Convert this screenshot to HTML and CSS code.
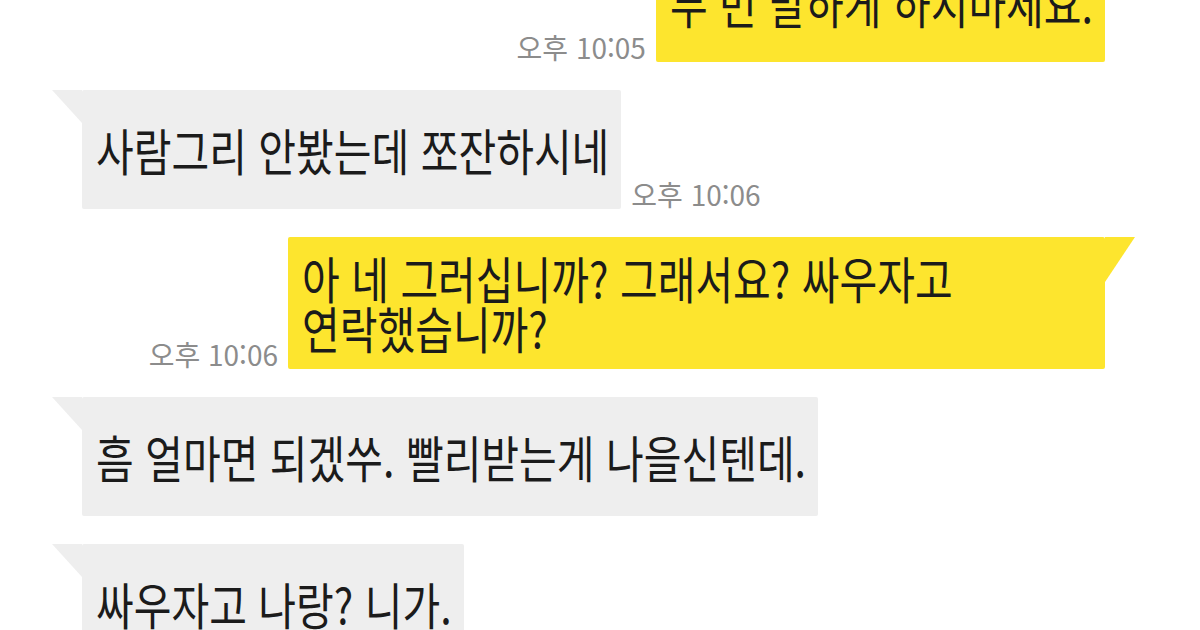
FILE: index.html
```html
<!DOCTYPE html>
<html lang="ko">
<head>
<meta charset="utf-8">
<title>채팅</title>
<link rel="stylesheet" href="styles.css">
</head>
<body>
<main class="chat">
  <div class="row sent">
    <span class="time">오후 10:05</span>
    <div class="bubble"><span class="txt">두 번 말하게 하지마세요.</span></div>
  </div>
  <div class="row recv">
    <div class="bubble tail"><span class="txt">사람그리 안봤는데 쪼잔하시네</span></div>
    <span class="time">오후 10:06</span>
  </div>
  <div class="row sent">
    <span class="time">오후 10:06</span>
    <div class="bubble tail"><span class="txt">아 네 그러십니까? 그래서요? 싸우자고 연락했습니까?</span></div>
  </div>
  <div class="row recv">
    <div class="bubble tail"><span class="txt">흠 얼마면 되겠쑤. 빨리받는게 나을신텐데.</span></div>
  </div>
  <div class="row recv">
    <div class="bubble tail"><span class="txt">싸우자고 나랑? 니가.</span></div>
  </div>
</main>
</body>
</html>
```

FILE: styles.css
```css
html, body {
  margin: 0;
  padding: 0;
  background: #ffffff;
  width: 1200px;
  height: 630px;
  overflow: hidden;
}

body {
  font-family: "Noto Sans CJK KR", "Noto Sans", sans-serif;
  color: #1b1b1b;
}

.chat {
  display: flex;
  flex-direction: column;
  gap: 28px;
  margin-top: -57px;
}

.row {
  display: flex;
  align-items: flex-end;
  gap: 10px;
}

.row.sent {
  justify-content: flex-end;
  padding-right: 95px;
}

.row.recv {
  justify-content: flex-start;
  padding-left: 82px;
}

.bubble {
  position: relative;
  box-sizing: border-box;
  min-height: 119px;
  display: flex;
  align-items: center;
  padding: 25px 12px 25px 14px;
  border-radius: 2px;
}

.sent .bubble {
  background: #fde52e;
  max-width: 817px;
}

.recv .bubble {
  background: #eeeeee;
}

.txt {
  display: inline-block;
  font-size: 41px;
  line-height: 41px;
  word-break: keep-all;
  transform: scaleY(1.22);
}

.tail::before {
  content: "";
  position: absolute;
  top: 0;
  width: 30px;
  background: inherit;
}

.recv .tail::before {
  left: -30px;
  height: 33px;
  clip-path: polygon(0 0, 100% 0, 100% 100%);
}

.sent .tail::before {
  right: -30px;
  height: 45px;
  clip-path: polygon(0 0, 100% 0, 0 100%);
}

.time {
  font-size: 28px;
  line-height: 30px;
  color: #8c8c8c;
  white-space: nowrap;
}
```
